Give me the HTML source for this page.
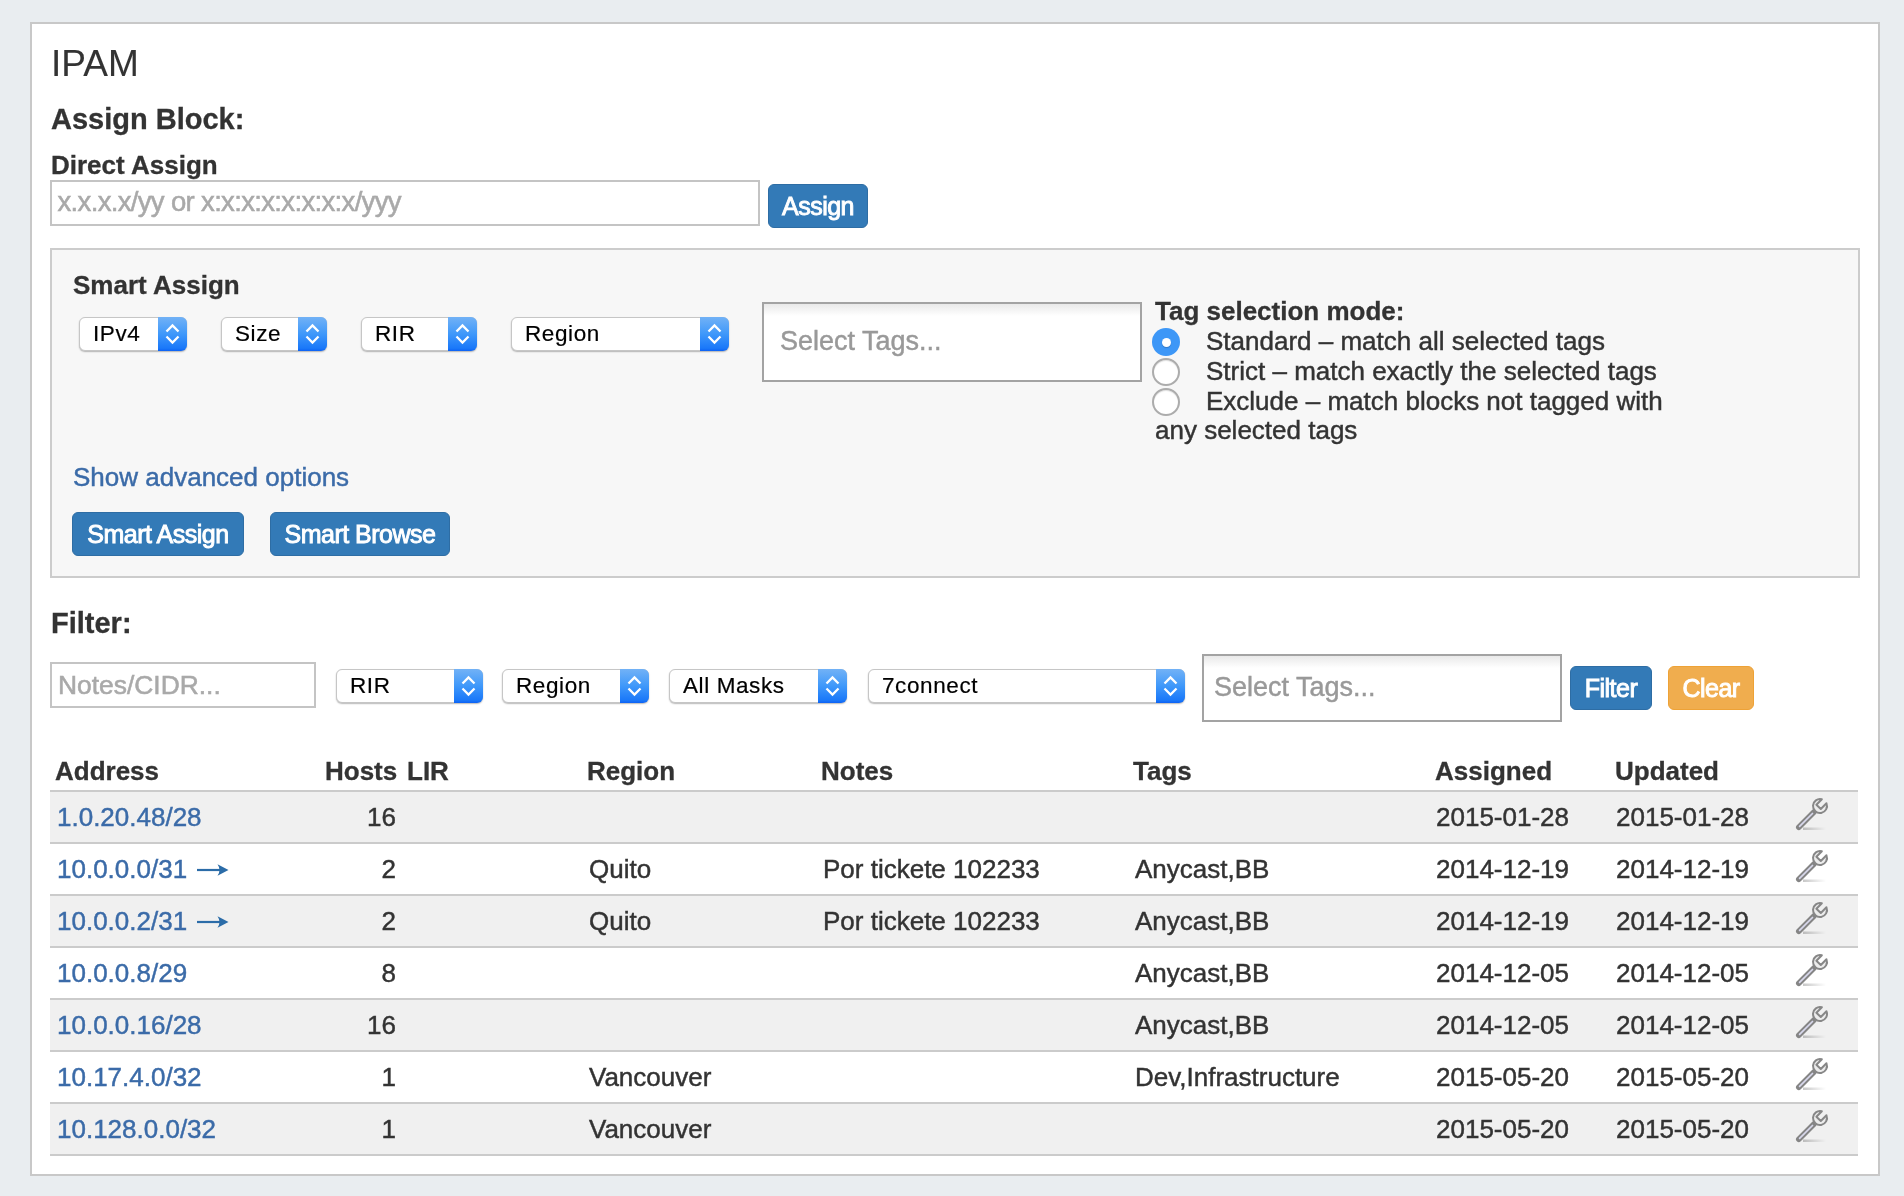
<!DOCTYPE html>
<html><head><meta charset="utf-8"><title>IPAM</title>
<style>
html,body{margin:0;padding:0;width:1904px;height:1196px;overflow:hidden;background:#e9edf0;font-family:"Liberation Sans", sans-serif;}
.t{position:absolute;line-height:1;white-space:nowrap;-webkit-text-stroke-width:0.45px;}
.b{-webkit-text-stroke-width:0.3px}
#root{position:absolute;left:0;top:0;width:1904px;height:1196px;will-change:transform}
.sel{position:absolute;box-sizing:border-box;border-radius:6px;background:#fff;border:1px solid #c6c6c6;box-shadow:0 1px 1.5px rgba(0,0,0,.28)}
.selarr{position:absolute;right:-1px;top:-1px;width:29px;border-radius:0 6px 6px 0;background:linear-gradient(#72b2f6,#3f98fa 50%,#1a78f9 92%,#0d62f5)}
.sel svg{top:-1px!important;right:-1px!important}
.btn{position:absolute;box-sizing:border-box;border:1px solid;border-radius:6px;color:#fff;text-align:center;white-space:nowrap;-webkit-text-stroke:0.9px #fff;letter-spacing:-0.5px}
.tags{position:absolute;box-sizing:border-box;border:2px solid #a3a3a3;background:linear-gradient(#e9e9e9,#fff 12px,#fff)}
</style></head><body><div id="root">
<div style="position:absolute;left:30px;top:22px;width:1850px;height:1154px;box-sizing:border-box;border:2px solid #c8c8c8;background:#fff"></div><div class="t" style="left:51px;top:44.68px;font-size:37px;font-weight:400;color:#333;-webkit-text-stroke-width:0.1px">IPAM</div><div class="t b" style="left:51px;top:105.45px;font-size:29px;font-weight:700;color:#333;">Assign Block:</div><div class="t b" style="left:51px;top:151.99px;font-size:26px;font-weight:700;color:#333;">Direct Assign</div><div style="position:absolute;left:50px;top:180px;width:710px;height:46px;box-sizing:border-box;border:2px solid #c4c4c4;background:#fff"></div><div class="t" style="left:57.5px;top:188.12px;font-size:27.5px;font-weight:400;color:#a9a9a9;letter-spacing:-0.66px;-webkit-text-stroke-width:0.55px">x.x.x.x/yy or x:x:x:x:x:x:x:x/yyy</div><div class="btn" style="left:768px;top:184px;width:100px;height:44px;background:#337ab7;border-color:#2e6da4;font-size:25px;line-height:42px">Assign</div><div style="position:absolute;left:50px;top:248px;width:1810px;height:330px;box-sizing:border-box;border:2px solid #cccccc;background:#f7f7f7"></div><div class="t b" style="left:73px;top:271.99px;font-size:26px;font-weight:700;color:#333;">Smart Assign</div><div class="sel" style="left:79px;top:317px;width:108px;height:34px"><div class="selarr" style="height:34px"></div><svg width="29" height="34" viewBox="0 0 29 34" style="position:absolute;right:0;top:0"><path d="M8.5 14.5 L14.5 8.5 L20.5 14.5 M8.5 19.5 L14.5 25.5 L20.5 19.5" fill="none" stroke="#fff" stroke-width="2.3" stroke-linecap="butt" stroke-linejoin="miter"/></svg><div class="t" style="left:13px;top:4.8px;font-size:22.5px;color:#000;letter-spacing:0.6px;-webkit-text-stroke-width:0.2px">IPv4</div></div><div class="sel" style="left:221px;top:317px;width:106px;height:34px"><div class="selarr" style="height:34px"></div><svg width="29" height="34" viewBox="0 0 29 34" style="position:absolute;right:0;top:0"><path d="M8.5 14.5 L14.5 8.5 L20.5 14.5 M8.5 19.5 L14.5 25.5 L20.5 19.5" fill="none" stroke="#fff" stroke-width="2.3" stroke-linecap="butt" stroke-linejoin="miter"/></svg><div class="t" style="left:13px;top:4.8px;font-size:22.5px;color:#000;letter-spacing:0.6px;-webkit-text-stroke-width:0.2px">Size</div></div><div class="sel" style="left:361px;top:317px;width:116px;height:34px"><div class="selarr" style="height:34px"></div><svg width="29" height="34" viewBox="0 0 29 34" style="position:absolute;right:0;top:0"><path d="M8.5 14.5 L14.5 8.5 L20.5 14.5 M8.5 19.5 L14.5 25.5 L20.5 19.5" fill="none" stroke="#fff" stroke-width="2.3" stroke-linecap="butt" stroke-linejoin="miter"/></svg><div class="t" style="left:13px;top:4.8px;font-size:22.5px;color:#000;letter-spacing:0.6px;-webkit-text-stroke-width:0.2px">RIR</div></div><div class="sel" style="left:511px;top:317px;width:218px;height:34px"><div class="selarr" style="height:34px"></div><svg width="29" height="34" viewBox="0 0 29 34" style="position:absolute;right:0;top:0"><path d="M8.5 14.5 L14.5 8.5 L20.5 14.5 M8.5 19.5 L14.5 25.5 L20.5 19.5" fill="none" stroke="#fff" stroke-width="2.3" stroke-linecap="butt" stroke-linejoin="miter"/></svg><div class="t" style="left:13px;top:4.8px;font-size:22.5px;color:#000;letter-spacing:0.6px;-webkit-text-stroke-width:0.2px">Region</div></div><div class="tags" style="left:762px;top:302px;width:380px;height:80px"></div><div class="t" style="left:780px;top:327.54px;font-size:27px;font-weight:400;color:#999;">Select Tags...</div><div class="t b" style="left:1155px;top:297.99px;font-size:26px;font-weight:700;color:#333;">Tag selection mode:</div><div style="position:absolute;left:1152px;top:328px;width:28px;height:28px;border-radius:50%;background:#3d97f7"></div><div style="position:absolute;left:1161.5px;top:337.5px;width:9px;height:9px;border-radius:50%;background:#fff;box-shadow:0 1px 1px rgba(0,0,0,.2)"></div><div style="position:absolute;left:1152px;top:358px;width:28px;height:28px;box-sizing:border-box;border-radius:50%;background:#fff;border:2px solid #acacac;box-shadow:inset 0 1px 1px rgba(0,0,0,.12)"></div><div style="position:absolute;left:1152px;top:388px;width:28px;height:28px;box-sizing:border-box;border-radius:50%;background:#fff;border:2px solid #acacac;box-shadow:inset 0 1px 1px rgba(0,0,0,.12)"></div><div class="t" style="left:1206px;top:327.79px;font-size:26px;font-weight:400;color:#333;">Standard – match all selected tags</div><div class="t" style="left:1206px;top:357.79px;font-size:26px;font-weight:400;color:#333;">Strict – match exactly the selected tags</div><div class="t" style="left:1206px;top:387.69px;font-size:26px;font-weight:400;color:#333;">Exclude – match blocks not tagged with</div><div class="t" style="left:1155px;top:417.19px;font-size:26px;font-weight:400;color:#333;">any selected tags</div><div class="t" style="left:73px;top:463.69px;font-size:26px;font-weight:400;color:#3b6ba8;">Show advanced options</div><div class="btn" style="left:72px;top:512px;width:172px;height:44px;background:#337ab7;border-color:#2e6da4;font-size:25px;line-height:42px">Smart Assign</div><div class="btn" style="left:270px;top:512px;width:180px;height:44px;background:#337ab7;border-color:#2e6da4;font-size:25px;line-height:42px">Smart Browse</div><div class="t b" style="left:51px;top:609.45px;font-size:29px;font-weight:700;color:#333;">Filter:</div><div style="position:absolute;left:50px;top:662px;width:266px;height:46px;box-sizing:border-box;border:2px solid #c4c4c4;background:#fff"></div><div class="t" style="left:58px;top:671.85px;font-size:26.4px;font-weight:400;color:#a9a9a9;-webkit-text-stroke-width:0.55px">Notes/CIDR...</div><div class="sel" style="left:336px;top:669px;width:147px;height:34px"><div class="selarr" style="height:34px"></div><svg width="29" height="34" viewBox="0 0 29 34" style="position:absolute;right:0;top:0"><path d="M8.5 14.5 L14.5 8.5 L20.5 14.5 M8.5 19.5 L14.5 25.5 L20.5 19.5" fill="none" stroke="#fff" stroke-width="2.3" stroke-linecap="butt" stroke-linejoin="miter"/></svg><div class="t" style="left:13px;top:4.8px;font-size:22.5px;color:#000;letter-spacing:0.6px;-webkit-text-stroke-width:0.2px">RIR</div></div><div class="sel" style="left:502px;top:669px;width:147px;height:34px"><div class="selarr" style="height:34px"></div><svg width="29" height="34" viewBox="0 0 29 34" style="position:absolute;right:0;top:0"><path d="M8.5 14.5 L14.5 8.5 L20.5 14.5 M8.5 19.5 L14.5 25.5 L20.5 19.5" fill="none" stroke="#fff" stroke-width="2.3" stroke-linecap="butt" stroke-linejoin="miter"/></svg><div class="t" style="left:13px;top:4.8px;font-size:22.5px;color:#000;letter-spacing:0.6px;-webkit-text-stroke-width:0.2px">Region</div></div><div class="sel" style="left:669px;top:669px;width:178px;height:34px"><div class="selarr" style="height:34px"></div><svg width="29" height="34" viewBox="0 0 29 34" style="position:absolute;right:0;top:0"><path d="M8.5 14.5 L14.5 8.5 L20.5 14.5 M8.5 19.5 L14.5 25.5 L20.5 19.5" fill="none" stroke="#fff" stroke-width="2.3" stroke-linecap="butt" stroke-linejoin="miter"/></svg><div class="t" style="left:13px;top:4.8px;font-size:22.5px;color:#000;letter-spacing:0.6px;-webkit-text-stroke-width:0.2px">All Masks</div></div><div class="sel" style="left:868px;top:669px;width:317px;height:34px"><div class="selarr" style="height:34px"></div><svg width="29" height="34" viewBox="0 0 29 34" style="position:absolute;right:0;top:0"><path d="M8.5 14.5 L14.5 8.5 L20.5 14.5 M8.5 19.5 L14.5 25.5 L20.5 19.5" fill="none" stroke="#fff" stroke-width="2.3" stroke-linecap="butt" stroke-linejoin="miter"/></svg><div class="t" style="left:13px;top:4.8px;font-size:22.5px;color:#000;letter-spacing:0.6px;-webkit-text-stroke-width:0.2px">7connect</div></div><div class="tags" style="left:1202px;top:654px;width:360px;height:68px"></div><div class="t" style="left:1214px;top:674.34px;font-size:27px;font-weight:400;color:#999;">Select Tags...</div><div class="btn" style="left:1570px;top:666px;width:82px;height:44px;background:#337ab7;border-color:#2e6da4;font-size:25px;line-height:42px">Filter</div><div class="btn" style="left:1668px;top:666px;width:86px;height:44px;background:#f0ad4e;border-color:#eea236;font-size:25px;line-height:42px">Clear</div><div class="t b" style="left:55px;top:757.59px;font-size:26px;font-weight:700;color:#333;">Address</div><div class="t b" style="left:325px;top:757.59px;font-size:26px;font-weight:700;color:#333;">Hosts</div><div class="t b" style="left:407px;top:757.59px;font-size:26px;font-weight:700;color:#333;">LIR</div><div class="t b" style="left:587px;top:757.59px;font-size:26px;font-weight:700;color:#333;">Region</div><div class="t b" style="left:821px;top:757.59px;font-size:26px;font-weight:700;color:#333;">Notes</div><div class="t b" style="left:1133px;top:757.59px;font-size:26px;font-weight:700;color:#333;">Tags</div><div class="t b" style="left:1435px;top:757.59px;font-size:26px;font-weight:700;color:#333;">Assigned</div><div class="t b" style="left:1615px;top:757.59px;font-size:26px;font-weight:700;color:#333;">Updated</div><div style="position:absolute;left:50px;top:790px;width:1808px;height:2px;box-sizing:border-box;background:#cbcbcb"></div><div style="position:absolute;left:50px;top:792px;width:1808px;height:50px;box-sizing:border-box;background:#f0f0f0"></div><div style="position:absolute;left:50px;top:842px;width:1808px;height:2px;box-sizing:border-box;background:#cbcbcb"></div><div class="t" style="left:57px;top:803.99px;font-size:26px;font-weight:400;color:#3b6ba8;">1.0.20.48/28</div><div class="t" style="right:1508px;top:803.99px;font-size:26px;color:#333">16</div><div class="t" style="left:1436px;top:803.99px;font-size:26px;font-weight:400;color:#333;">2015-01-28</div><div class="t" style="left:1616px;top:803.99px;font-size:26px;font-weight:400;color:#333;">2015-01-28</div><svg width="36" height="36" viewBox="0 0 36 36" style="position:absolute;left:1794px;top:796px">
<defs><linearGradient id="sh0" x1="0" x2="1"><stop offset="0" stop-color="#000" stop-opacity=".22"/><stop offset="1" stop-color="#000" stop-opacity="0"/></linearGradient></defs>
<rect x="9" y="31.5" width="23" height="2.5" fill="url(#sh0)"/>
<path d="M4.8 31.2 L20 16" stroke="#858585" stroke-width="5.6" stroke-linecap="round"/>
<path d="M5.6 30.4 L18.5 17.5" stroke="#d8d8ec" stroke-width="1.7" stroke-linecap="round"/>
<path d="M27.85 3.25 L22.4 8.7 L26.8 13 L32.47 7.33 A7 7 0 1 1 27.85 3.25 Z" fill="#ececec" stroke="#878787" stroke-width="2" stroke-linejoin="round"/>
</svg><div style="position:absolute;left:50px;top:844px;width:1808px;height:50px;box-sizing:border-box;background:#fff"></div><div style="position:absolute;left:50px;top:894px;width:1808px;height:2px;box-sizing:border-box;background:#cbcbcb"></div><div class="t" style="left:57px;top:855.99px;font-size:26px;font-weight:400;color:#3b6ba8;">10.0.0.0/31</div><svg width="34" height="16" viewBox="0 0 34 16" style="position:absolute;left:196px;top:861.5px"><path d="M1 8 L29 8" stroke="#2b6ca8" stroke-width="2.2"/><path d="M32.5 8 L21.5 2.2 Q25.5 8 21.5 13.8 Z" fill="#2b6ca8"/></svg><div class="t" style="right:1508px;top:855.99px;font-size:26px;color:#333">2</div><div class="t" style="left:589px;top:855.99px;font-size:26px;font-weight:400;color:#333;">Quito</div><div class="t" style="left:823px;top:855.99px;font-size:26px;font-weight:400;color:#333;">Por tickete 102233</div><div class="t" style="left:1135px;top:855.99px;font-size:26px;font-weight:400;color:#333;">Anycast,BB</div><div class="t" style="left:1436px;top:855.99px;font-size:26px;font-weight:400;color:#333;">2014-12-19</div><div class="t" style="left:1616px;top:855.99px;font-size:26px;font-weight:400;color:#333;">2014-12-19</div><svg width="36" height="36" viewBox="0 0 36 36" style="position:absolute;left:1794px;top:848px">
<defs><linearGradient id="sh1" x1="0" x2="1"><stop offset="0" stop-color="#000" stop-opacity=".22"/><stop offset="1" stop-color="#000" stop-opacity="0"/></linearGradient></defs>
<rect x="9" y="31.5" width="23" height="2.5" fill="url(#sh1)"/>
<path d="M4.8 31.2 L20 16" stroke="#858585" stroke-width="5.6" stroke-linecap="round"/>
<path d="M5.6 30.4 L18.5 17.5" stroke="#d8d8ec" stroke-width="1.7" stroke-linecap="round"/>
<path d="M27.85 3.25 L22.4 8.7 L26.8 13 L32.47 7.33 A7 7 0 1 1 27.85 3.25 Z" fill="#ececec" stroke="#878787" stroke-width="2" stroke-linejoin="round"/>
</svg><div style="position:absolute;left:50px;top:896px;width:1808px;height:50px;box-sizing:border-box;background:#f0f0f0"></div><div style="position:absolute;left:50px;top:946px;width:1808px;height:2px;box-sizing:border-box;background:#cbcbcb"></div><div class="t" style="left:57px;top:907.99px;font-size:26px;font-weight:400;color:#3b6ba8;">10.0.0.2/31</div><svg width="34" height="16" viewBox="0 0 34 16" style="position:absolute;left:196px;top:913.5px"><path d="M1 8 L29 8" stroke="#2b6ca8" stroke-width="2.2"/><path d="M32.5 8 L21.5 2.2 Q25.5 8 21.5 13.8 Z" fill="#2b6ca8"/></svg><div class="t" style="right:1508px;top:907.99px;font-size:26px;color:#333">2</div><div class="t" style="left:589px;top:907.99px;font-size:26px;font-weight:400;color:#333;">Quito</div><div class="t" style="left:823px;top:907.99px;font-size:26px;font-weight:400;color:#333;">Por tickete 102233</div><div class="t" style="left:1135px;top:907.99px;font-size:26px;font-weight:400;color:#333;">Anycast,BB</div><div class="t" style="left:1436px;top:907.99px;font-size:26px;font-weight:400;color:#333;">2014-12-19</div><div class="t" style="left:1616px;top:907.99px;font-size:26px;font-weight:400;color:#333;">2014-12-19</div><svg width="36" height="36" viewBox="0 0 36 36" style="position:absolute;left:1794px;top:900px">
<defs><linearGradient id="sh2" x1="0" x2="1"><stop offset="0" stop-color="#000" stop-opacity=".22"/><stop offset="1" stop-color="#000" stop-opacity="0"/></linearGradient></defs>
<rect x="9" y="31.5" width="23" height="2.5" fill="url(#sh2)"/>
<path d="M4.8 31.2 L20 16" stroke="#858585" stroke-width="5.6" stroke-linecap="round"/>
<path d="M5.6 30.4 L18.5 17.5" stroke="#d8d8ec" stroke-width="1.7" stroke-linecap="round"/>
<path d="M27.85 3.25 L22.4 8.7 L26.8 13 L32.47 7.33 A7 7 0 1 1 27.85 3.25 Z" fill="#ececec" stroke="#878787" stroke-width="2" stroke-linejoin="round"/>
</svg><div style="position:absolute;left:50px;top:948px;width:1808px;height:50px;box-sizing:border-box;background:#fff"></div><div style="position:absolute;left:50px;top:998px;width:1808px;height:2px;box-sizing:border-box;background:#cbcbcb"></div><div class="t" style="left:57px;top:959.99px;font-size:26px;font-weight:400;color:#3b6ba8;">10.0.0.8/29</div><div class="t" style="right:1508px;top:959.99px;font-size:26px;color:#333">8</div><div class="t" style="left:1135px;top:959.99px;font-size:26px;font-weight:400;color:#333;">Anycast,BB</div><div class="t" style="left:1436px;top:959.99px;font-size:26px;font-weight:400;color:#333;">2014-12-05</div><div class="t" style="left:1616px;top:959.99px;font-size:26px;font-weight:400;color:#333;">2014-12-05</div><svg width="36" height="36" viewBox="0 0 36 36" style="position:absolute;left:1794px;top:952px">
<defs><linearGradient id="sh3" x1="0" x2="1"><stop offset="0" stop-color="#000" stop-opacity=".22"/><stop offset="1" stop-color="#000" stop-opacity="0"/></linearGradient></defs>
<rect x="9" y="31.5" width="23" height="2.5" fill="url(#sh3)"/>
<path d="M4.8 31.2 L20 16" stroke="#858585" stroke-width="5.6" stroke-linecap="round"/>
<path d="M5.6 30.4 L18.5 17.5" stroke="#d8d8ec" stroke-width="1.7" stroke-linecap="round"/>
<path d="M27.85 3.25 L22.4 8.7 L26.8 13 L32.47 7.33 A7 7 0 1 1 27.85 3.25 Z" fill="#ececec" stroke="#878787" stroke-width="2" stroke-linejoin="round"/>
</svg><div style="position:absolute;left:50px;top:1000px;width:1808px;height:50px;box-sizing:border-box;background:#f0f0f0"></div><div style="position:absolute;left:50px;top:1050px;width:1808px;height:2px;box-sizing:border-box;background:#cbcbcb"></div><div class="t" style="left:57px;top:1011.99px;font-size:26px;font-weight:400;color:#3b6ba8;">10.0.0.16/28</div><div class="t" style="right:1508px;top:1011.99px;font-size:26px;color:#333">16</div><div class="t" style="left:1135px;top:1011.99px;font-size:26px;font-weight:400;color:#333;">Anycast,BB</div><div class="t" style="left:1436px;top:1011.99px;font-size:26px;font-weight:400;color:#333;">2014-12-05</div><div class="t" style="left:1616px;top:1011.99px;font-size:26px;font-weight:400;color:#333;">2014-12-05</div><svg width="36" height="36" viewBox="0 0 36 36" style="position:absolute;left:1794px;top:1004px">
<defs><linearGradient id="sh4" x1="0" x2="1"><stop offset="0" stop-color="#000" stop-opacity=".22"/><stop offset="1" stop-color="#000" stop-opacity="0"/></linearGradient></defs>
<rect x="9" y="31.5" width="23" height="2.5" fill="url(#sh4)"/>
<path d="M4.8 31.2 L20 16" stroke="#858585" stroke-width="5.6" stroke-linecap="round"/>
<path d="M5.6 30.4 L18.5 17.5" stroke="#d8d8ec" stroke-width="1.7" stroke-linecap="round"/>
<path d="M27.85 3.25 L22.4 8.7 L26.8 13 L32.47 7.33 A7 7 0 1 1 27.85 3.25 Z" fill="#ececec" stroke="#878787" stroke-width="2" stroke-linejoin="round"/>
</svg><div style="position:absolute;left:50px;top:1052px;width:1808px;height:50px;box-sizing:border-box;background:#fff"></div><div style="position:absolute;left:50px;top:1102px;width:1808px;height:2px;box-sizing:border-box;background:#cbcbcb"></div><div class="t" style="left:57px;top:1063.99px;font-size:26px;font-weight:400;color:#3b6ba8;">10.17.4.0/32</div><div class="t" style="right:1508px;top:1063.99px;font-size:26px;color:#333">1</div><div class="t" style="left:589px;top:1063.99px;font-size:26px;font-weight:400;color:#333;">Vancouver</div><div class="t" style="left:1135px;top:1063.99px;font-size:26px;font-weight:400;color:#333;">Dev,Infrastructure</div><div class="t" style="left:1436px;top:1063.99px;font-size:26px;font-weight:400;color:#333;">2015-05-20</div><div class="t" style="left:1616px;top:1063.99px;font-size:26px;font-weight:400;color:#333;">2015-05-20</div><svg width="36" height="36" viewBox="0 0 36 36" style="position:absolute;left:1794px;top:1056px">
<defs><linearGradient id="sh5" x1="0" x2="1"><stop offset="0" stop-color="#000" stop-opacity=".22"/><stop offset="1" stop-color="#000" stop-opacity="0"/></linearGradient></defs>
<rect x="9" y="31.5" width="23" height="2.5" fill="url(#sh5)"/>
<path d="M4.8 31.2 L20 16" stroke="#858585" stroke-width="5.6" stroke-linecap="round"/>
<path d="M5.6 30.4 L18.5 17.5" stroke="#d8d8ec" stroke-width="1.7" stroke-linecap="round"/>
<path d="M27.85 3.25 L22.4 8.7 L26.8 13 L32.47 7.33 A7 7 0 1 1 27.85 3.25 Z" fill="#ececec" stroke="#878787" stroke-width="2" stroke-linejoin="round"/>
</svg><div style="position:absolute;left:50px;top:1104px;width:1808px;height:50px;box-sizing:border-box;background:#f0f0f0"></div><div style="position:absolute;left:50px;top:1154px;width:1808px;height:2px;box-sizing:border-box;background:#cbcbcb"></div><div class="t" style="left:57px;top:1115.99px;font-size:26px;font-weight:400;color:#3b6ba8;">10.128.0.0/32</div><div class="t" style="right:1508px;top:1115.99px;font-size:26px;color:#333">1</div><div class="t" style="left:589px;top:1115.99px;font-size:26px;font-weight:400;color:#333;">Vancouver</div><div class="t" style="left:1436px;top:1115.99px;font-size:26px;font-weight:400;color:#333;">2015-05-20</div><div class="t" style="left:1616px;top:1115.99px;font-size:26px;font-weight:400;color:#333;">2015-05-20</div><svg width="36" height="36" viewBox="0 0 36 36" style="position:absolute;left:1794px;top:1108px">
<defs><linearGradient id="sh6" x1="0" x2="1"><stop offset="0" stop-color="#000" stop-opacity=".22"/><stop offset="1" stop-color="#000" stop-opacity="0"/></linearGradient></defs>
<rect x="9" y="31.5" width="23" height="2.5" fill="url(#sh6)"/>
<path d="M4.8 31.2 L20 16" stroke="#858585" stroke-width="5.6" stroke-linecap="round"/>
<path d="M5.6 30.4 L18.5 17.5" stroke="#d8d8ec" stroke-width="1.7" stroke-linecap="round"/>
<path d="M27.85 3.25 L22.4 8.7 L26.8 13 L32.47 7.33 A7 7 0 1 1 27.85 3.25 Z" fill="#ececec" stroke="#878787" stroke-width="2" stroke-linejoin="round"/>
</svg>
</div></body></html>
